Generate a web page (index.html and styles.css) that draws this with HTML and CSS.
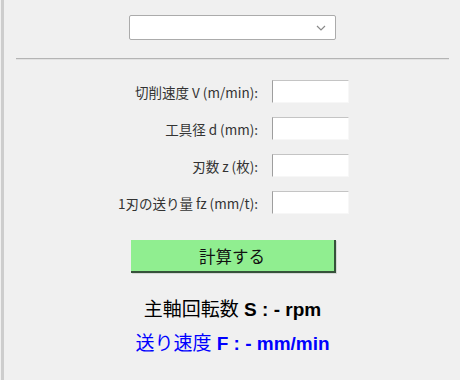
FILE: index.html
```html
<!DOCTYPE html>
<html lang="ja">
<head>
    <meta charset="UTF-8">
    <title>切削条件計算</title>
    <link rel="stylesheet" href="styles.css">
</head>
<body>
    <div class="frame">
        <div class="select-row">
            <div class="select-wrap">
                <select id="preset"></select>
                <svg class="chevron" width="10" height="6" viewBox="0 0 10 6">
                    <path d="M1 1 L5 5 L9 1" fill="none" stroke="#8a8a8a" stroke-width="1.2"/>
                </svg>
            </div>
        </div>

        <hr class="sep">

        <div class="form">
            <label for="vc">切削速度 V (m/min):</label>
            <input type="text" id="vc">
            <label for="dia">工具径 d (mm):</label>
            <input type="text" id="dia">
            <label for="z">刃数 z (枚):</label>
            <input type="text" id="z">
            <label for="fz">1刃の送り量 fz (mm/t):</label>
            <input type="text" id="fz">
        </div>

        <div class="btn-row">
            <button class="btn-calc" onclick="calc()">計算する</button>
        </div>

        <div class="result">
            <p class="res-s">主軸回転数 <b>S : <span id="resS">-</span> rpm</b></p>
            <p class="res-f">送り速度 <b>F : <span id="resF">-</span> mm/min</b></p>
        </div>
    </div>

    <script>
        function calc() {
            const v = parseFloat(document.getElementById('vc').value);
            const d = parseFloat(document.getElementById('dia').value);
            const z = parseFloat(document.getElementById('z').value);
            const fz = parseFloat(document.getElementById('fz').value);
            if (!v || !d) return;
            const s = Math.round(1000 * v / (Math.PI * d));
            document.getElementById('resS').textContent = s;
            if (z && fz) {
                document.getElementById('resF').textContent = Math.round(s * z * fz);
            }
        }
    </script>
</body>
</html>
```

FILE: styles.css
```css
body {
    margin: 0;
    background-color: #f0f0f0;
    font-family: "Noto Sans CJK JP", sans-serif;
}

.frame {
    margin-left: 1px;
    border-left: 3px solid #cdcdcd;
    height: 380px;
    box-sizing: border-box;
    padding: 15px 11px 0 12px;
}

.select-row {
    display: flex;
    justify-content: center;
}

.select-wrap {
    position: relative;
    width: 207px;
    height: 25px;
    margin-left: -1px;
}

.select-wrap select {
    display: block;
    appearance: none;
    width: 100%;
    height: 100%;
    background: white;
    border: 1px solid #ababab;
    border-radius: 2px;
    margin: 0;
}

.chevron {
    position: absolute;
    right: 10px;
    top: 10px;
}

.sep {
    border: none;
    border-top: 1px solid #b4b4b4;
    border-bottom: 1px solid #e2e2e2;
    margin: 18px 0 0 0;
}

.form {
    display: grid;
    grid-template-columns: 242px 77px;
    column-gap: 14px;
    row-gap: 14px;
    align-items: center;
    margin-top: 20px;
}

.form label {
    text-align: right;
    font-size: 13.5px;
    color: #333;
    white-space: nowrap;
}

.form input {
    height: 23px;
    box-sizing: border-box;
    border: 1px solid #f7f7f7;
    border-top-color: #c4c4c4;
    border-left-color: #9e9e9e;
    background: white;
    margin: 0;
    padding: 0 3px;
}

.btn-row {
    display: flex;
    justify-content: center;
    margin-top: 26px;
}

.btn-calc {
    width: 205px;
    height: 33px;
    background-color: #90ee90;
    border: none;
    border-right: 2px solid #36523a;
    border-bottom: 2px solid #36523a;
    box-shadow: 1px 1px 0 #d6d6d6;
    font-family: "Noto Sans CJK JP", sans-serif;
    font-size: 16.5px;
    color: #111;
    padding: 0;
    margin-left: 1px;
    cursor: pointer;
}

.result {
    text-align: center;
    margin-top: 20px;
    font-family: "Liberation Sans", "Noto Sans CJK JP", sans-serif;
    font-size: 19px;
}

.result p {
    margin: 0;
    line-height: 34px;
}

.res-s {
    color: #000;
}

.res-f {
    color: #0000ff;
}
```
